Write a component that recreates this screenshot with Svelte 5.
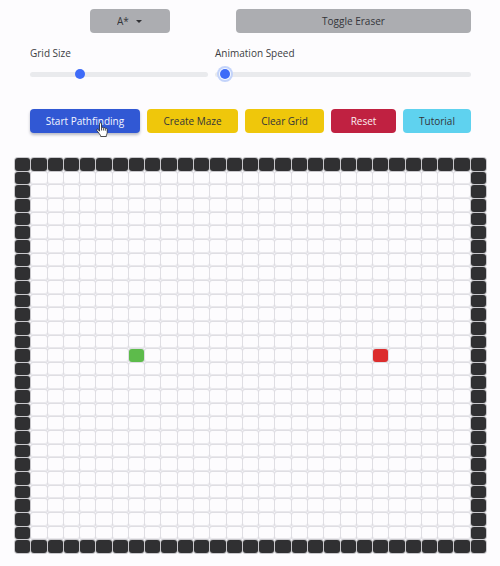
<script>
  const size = 29;
  const start = { row: 14, col: 7 };
  const target = { row: 14, col: 22 };

  let algorithm = $state('A*');
  let gridSize = $state(27);
  let speed = $state(2);

  const cells = Array.from({ length: size * size }, (_, i) => {
    const row = Math.floor(i / size);
    const col = i % size;
    if (row === start.row && col === start.col) return 'start';
    if (row === target.row && col === target.col) return 'target';
    const edge = row === 0 || col === 0 || row === size - 1 || col === size - 1;
    return edge ? 'wall' : 'open';
  });
</script>

<main>
  <section class="controls">
    <div class="top">
      <div class="picker">
        <select aria-label="Algorithm" bind:value={algorithm}>
          <option>A*</option>
          <option>Dijkstra</option>
        </select>
        <svg class="caret" viewBox="0 0 6 3" aria-hidden="true"><path d="M0 0h6L3 3z" /></svg>
      </div>
      <button class="eraser" type="button">Toggle Eraser</button>
    </div>

    <div class="sliders">
      <div class="field">
        <label for="grid-size">Grid Size</label>
        <input id="grid-size" type="range" min="0" max="100" bind:value={gridSize} />
      </div>
      <div class="field wide">
        <label for="speed">Animation Speed</label>
        <input id="speed" class="focused" type="range" min="0" max="100" bind:value={speed} />
      </div>
    </div>

    <div class="actions">
      <button class="run" type="button">
        Start Pathfinding
        <svg class="pointer" viewBox="0 0 12 15" aria-hidden="true">
          <path d="M3.5 9.2V1.8c0-1.4 2-1.4 2 0v4c.2-.8 1.8-.7 1.9.3.4-.7 1.8-.5 1.9.5.5-.6 1.9-.3 1.9.9v3c0 1.3-.9 2-.9 4H4.7c0-1.3-1-2-1.7-3.2L.9 8.6c-.8-1.2.6-2.1 1.5-.9z" />
          <path d="M5.5 6v2.5M7.4 6.3v2.2M9.3 7v1.7" />
        </svg>
      </button>
      <button class="maze" type="button">Create Maze</button>
      <button class="clear" type="button">Clear Grid</button>
      <button class="reset" type="button">Reset</button>
      <button class="tutorial" type="button">Tutorial</button>
    </div>
  </section>

  <section class="board" aria-label="Pathfinding grid">
    {#each cells as kind}
      <div class="cell {kind}"></div>
    {/each}
  </section>
</main>

<style>
  :global(body) {
    background: #fdfcfe;
  }

  main {
    padding: 9px 14px 12px 15px;
    font: 10px/16px "Open Sans", "Noto Sans", sans-serif;
    color: #3c3d42;
  }

  .controls {
    padding: 0 15px;
  }

  .top {
    display: grid;
    grid-template-columns: 80fr 235fr;
    gap: 66px;
    padding-left: 60px;
  }

  button,
  select {
    height: 24px;
    margin: 0;
    padding: 0;
    border: 0;
    border-radius: 4px;
    font: inherit;
    color: #34353a;
    white-space: nowrap;
    cursor: pointer;
  }

  .picker {
    position: relative;
  }

  select {
    display: block;
    width: 100%;
    padding-left: 27px;
    appearance: none;
    background: #acadb1;
  }

  .caret {
    position: absolute;
    top: 11px;
    left: 46px;
    width: 6px;
    height: 3px;
    fill: #303135;
    pointer-events: none;
  }

  .eraser {
    background: #acadb1;
  }

  .sliders {
    display: flex;
    gap: 7px;
    margin-top: 12px;
  }

  .field {
    flex: 178 1 0;
    min-width: 0;
  }

  .wide {
    flex-grow: 256;
  }

  label {
    display: block;
  }

  input {
    display: block;
    width: 100%;
    height: 16px;
    margin: 5px 0 0;
    appearance: none;
    background: none;
  }

  input::-webkit-slider-runnable-track {
    height: 5px;
    border-radius: 3px;
    background: #e9eaed;
  }

  input::-webkit-slider-thumb {
    width: 10px;
    height: 10px;
    margin-top: -3px;
    appearance: none;
    border-radius: 50%;
    background: #3e6bf8;
  }

  .focused::-webkit-slider-thumb {
    box-shadow: 0 0 0 1px #f5f8ff, 0 0 0 3px #c3d3fa;
  }

  .actions {
    display: flex;
    gap: 7px;
    margin-top: 27px;
  }

  .actions button {
    min-width: 0;
  }

  .actions .run {
    position: relative;
    flex: 110 1 0;
    background: #3158d4;
    box-shadow: 0 2px 3px #b9bac4;
    color: #f4f6ff;
  }

  .maze {
    flex: 91 1 0;
    background: #efc70b;
  }

  .clear {
    flex: 79 1 0;
    background: #efc70b;
  }

  .actions .reset {
    flex: 65 1 0;
    background: #c02141;
    color: #fbeef1;
  }

  .tutorial {
    flex: 68 1 0;
    background: #5fd2ef;
  }

  .pointer {
    position: absolute;
    top: 13px;
    left: 66px;
    width: 12px;
    height: 15px;
    fill: #fff;
    stroke: #222;
    stroke-width: 0.8;
  }

  .board {
    display: grid;
    grid-template: repeat(29, 1fr) / repeat(29, 1fr);
    gap: 1px;
    aspect-ratio: 471 / 395;
    margin-top: 25px;
  }

  .cell {
    border-radius: 3px;
  }

  .open {
    border-radius: 2px;
    background: #fdfcfe;
    box-shadow: inset 0 -1px #e9e8ec, 0 0 0 1px #dfdee3;
  }

  .wall {
    position: relative;
    background: #303032;
    box-shadow: 0 0 0 1px #c9c8cc;
  }

  .start {
    background: #5dbb4b;
    box-shadow: 0 0 0 1px #dfdee3;
  }

  .target {
    background: #dc2d2d;
    box-shadow: 0 0 0 1px #dfdee3;
  }
</style>
